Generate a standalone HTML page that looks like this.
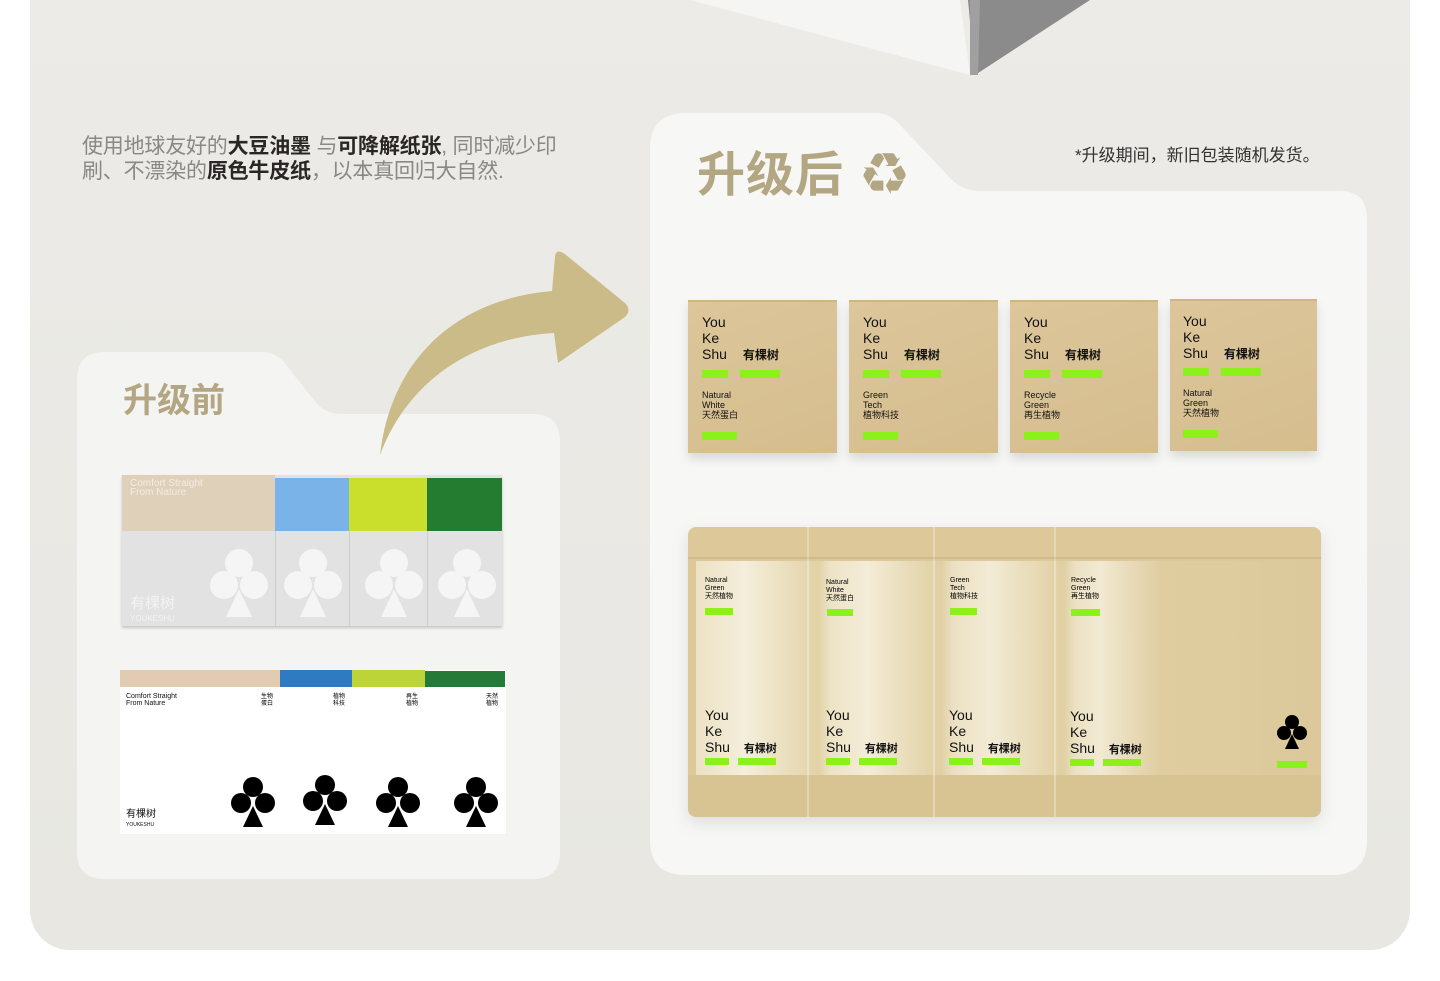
<!DOCTYPE html>
<html><head><meta charset="utf-8">
<style>
*{margin:0;padding:0;box-sizing:border-box}
body{width:1440px;height:981px;background:#fff;position:relative;overflow:hidden;font-family:"Liberation Sans","Noto Sans CJK SC",sans-serif}
.abs{position:absolute}
.panel{left:30px;top:-20px;width:1380px;height:970px;border-radius:0 0 40px 40px;background:linear-gradient(180deg,#ecebe7,#e8e7e2)}
.intro{left:82px;top:134px;font-size:21px;line-height:25px;color:#8a8884;letter-spacing:-0.2px}
.intro b{color:#2a2626;font-weight:700}
.t{color:#b3a682;font-weight:700}
.box{background:linear-gradient(160deg,#dcc69a,#d5bd8e);box-shadow:0 6px 10px rgba(0,0,0,.12);border-top:2px solid #cfb583}
.yk{font-size:14px;line-height:16px;color:#111;font-family:"Liberation Sans","Noto Sans CJK SC",sans-serif}
.g{background:#8cf01a;position:absolute;height:8px}
.sm{font-size:9px;line-height:10px;color:#111}
.bag{border-radius:8px}
</style></head><body>
<div class="abs panel"></div>
<svg class="abs" style="left:690px;top:0" width="420" height="80"><polygon points="10,0 270,0 280,75 0,0" fill="#f5f5f4"/><polygon points="278,0 400,0 285,75" fill="#8b8b8b"/><polygon points="280,0 290,0 288,75 280,75" fill="#a0a0a0"/></svg>

<div class="abs intro">使用地球友好的<b>大豆油墨</b> 与<b>可降解纸张</b>, 同时减少印<br>刷、不漂染的<b>原色牛皮纸</b>，以本真回归大自然.</div>

<svg class="abs" style="left:77px;top:352px" width="484" height="528"><path d="M0 28 Q0 0 28 0 L185 0 Q200 0 210 14 L240 52 Q250 62 265 62 L456 62 Q483 62 483 90 L483 500 Q483 527 456 527 L28 527 Q0 527 0 500 Z" fill="#f4f4f3"/></svg>
<div class="abs t" style="left:123px;top:373px;font-size:34px">升级前</div>

<svg class="abs" style="left:650px;top:113px" width="718" height="763"><path d="M0 36 Q0 0 36 0 L225 0 Q240 0 250 12 L300 65 Q312 78 330 78 L690 78 Q717 78 717 106 L717 727 Q717 762 682 762 L36 762 Q0 762 0 727 Z" fill="#f7f7f6"/></svg>
<div class="abs t" style="left:697px;top:135px;font-size:48px;letter-spacing:1px;white-space:nowrap">升级后 <span style="font-family:'DejaVu Sans';font-size:58px;vertical-align:-3px">♻</span></div>
<div class="abs" style="left:1075px;top:141px;font-size:17px;color:#333">*升级期间，新旧包装随机发货。</div>

<svg class="abs" style="left:370px;top:245px" width="270" height="220"><path d="M10 210 C20 120 80 55 182 46 L185 12 Q186 2 196 10 L255 58 Q262 65 255 72 L188 118 L184 88 C110 92 40 130 10 210 Z" fill="#cbbb88"/></svg>

<div class="abs" style="left:122px;top:475px;width:380px;height:151px;background:#e2e2e2;box-shadow:0 2px 3px rgba(0,0,0,.2)">
 <div class="abs" style="left:0;top:0;width:153px;height:56px;background:#dfd0ba"></div>
 <div class="abs" style="left:153px;top:3px;width:74px;height:53px;background:#7ab3e7"></div>
 <div class="abs" style="left:227px;top:3px;width:78px;height:53px;background:#c9df2c"></div>
 <div class="abs" style="left:305px;top:3px;width:75px;height:53px;background:#237c30"></div>
 <div class="abs" style="left:8px;top:4px;font-size:10px;line-height:9px;color:#f4ede2">Comfort Straight<br>From Nature</div>
 <div class="abs" style="left:8px;top:122px;font-size:15px;line-height:13px;color:#f3f3f3">有棵树<br><span style="font-size:8px">YOUKESHU</span></div>
 <div class="abs" style="left:153px;top:56px;width:1px;height:95px;background:#ccc"></div>
 <div class="abs" style="left:227px;top:56px;width:1px;height:95px;background:#ccc"></div>
 <div class="abs" style="left:305px;top:56px;width:1px;height:95px;background:#ccc"></div>
 <svg class="abs" style="left:88px;top:72px" width="58" height="72"><g fill="#f5f5f5"><circle cx="29" cy="16" r="14"/><circle cx="14" cy="38" r="14"/><circle cx="44" cy="38" r="14"/><polygon points="29,42 16,70 42,70"/></g></svg>
 <svg class="abs" style="left:162px;top:72px" width="58" height="72"><g fill="#f5f5f5"><circle cx="29" cy="16" r="14"/><circle cx="14" cy="38" r="14"/><circle cx="44" cy="38" r="14"/><polygon points="29,42 16,70 42,70"/></g></svg>
 <svg class="abs" style="left:243px;top:72px" width="58" height="72"><g fill="#f5f5f5"><circle cx="29" cy="16" r="14"/><circle cx="14" cy="38" r="14"/><circle cx="44" cy="38" r="14"/><polygon points="29,42 16,70 42,70"/></g></svg>
 <svg class="abs" style="left:316px;top:72px" width="58" height="72"><g fill="#f5f5f5"><circle cx="29" cy="16" r="14"/><circle cx="14" cy="38" r="14"/><circle cx="44" cy="38" r="14"/><polygon points="29,42 16,70 42,70"/></g></svg>
</div>

<div class="abs" style="left:120px;top:670px;width:386px;height:164px;background:#fff">
 <div class="abs" style="left:0;top:0;width:160px;height:17px;background:#e2ccb1"></div>
 <div class="abs" style="left:160px;top:0;width:72px;height:17px;background:#2f7bc3"></div>
 <div class="abs" style="left:232px;top:0;width:73px;height:17px;background:#bcd43a"></div>
 <div class="abs" style="left:305px;top:1px;width:80px;height:16px;background:#247a37"></div>
 <div class="abs" style="left:6px;top:23px;font-size:7px;line-height:7px;color:#111">Comfort Straight<br>From Nature</div>
 <div class="abs" style="left:141px;top:24px;font-size:6px;line-height:7px">生物<br>蛋白</div>
 <div class="abs" style="left:213px;top:24px;font-size:6px;line-height:7px">植物<br>科技</div>
 <div class="abs" style="left:286px;top:24px;font-size:6px;line-height:7px">再生<br>植物</div>
 <div class="abs" style="left:366px;top:24px;font-size:6px;line-height:7px">天然<br>植物</div>
 <div class="abs" style="left:6px;top:140px;font-size:10px;line-height:9px;color:#111">有棵树<br><span style="font-size:5px">YOUKESHU</span></div>
 <svg class="abs" style="left:111px;top:106px" width="44" height="52"><g fill="#000"><circle cx="22" cy="11" r="10"/><circle cx="10" cy="27" r="10"/><circle cx="34" cy="27" r="10"/><polygon points="22,30 12,51 32,51"/></g></svg>
 <svg class="abs" style="left:183px;top:104px" width="44" height="52"><g fill="#000"><circle cx="22" cy="11" r="10"/><circle cx="10" cy="27" r="10"/><circle cx="34" cy="27" r="10"/><polygon points="22,30 12,51 32,51"/></g></svg>
 <svg class="abs" style="left:256px;top:106px" width="44" height="52"><g fill="#000"><circle cx="22" cy="11" r="10"/><circle cx="10" cy="27" r="10"/><circle cx="34" cy="27" r="10"/><polygon points="22,30 12,51 32,51"/></g></svg>
 <svg class="abs" style="left:334px;top:106px" width="44" height="52"><g fill="#000"><circle cx="22" cy="11" r="10"/><circle cx="10" cy="27" r="10"/><circle cx="34" cy="27" r="10"/><polygon points="22,30 12,51 32,51"/></g></svg>
</div>

<div class="abs box" style="left:688px;top:300px;width:149px;height:153px">
 <div class="abs yk" style="left:14px;top:12px">You<br>Ke<br>Shu <span style="font-size:12px;margin-left:12px;font-weight:700">有棵树</span></div>
 <div class="g" style="left:14px;top:68px;width:26px"></div><div class="g" style="left:52px;top:68px;width:40px"></div>
 <div class="abs sm" style="left:14px;top:88px">Natural<br>White<br>天然蛋白</div>
 <div class="g" style="left:14px;top:130px;width:35px"></div>
</div>
<div class="abs box" style="left:849px;top:300px;width:149px;height:153px">
 <div class="abs yk" style="left:14px;top:12px">You<br>Ke<br>Shu <span style="font-size:12px;margin-left:12px;font-weight:700">有棵树</span></div>
 <div class="g" style="left:14px;top:68px;width:26px"></div><div class="g" style="left:52px;top:68px;width:40px"></div>
 <div class="abs sm" style="left:14px;top:88px">Green<br>Tech<br>植物科技</div>
 <div class="g" style="left:14px;top:130px;width:35px"></div>
</div>
<div class="abs box" style="left:1010px;top:300px;width:148px;height:153px">
 <div class="abs yk" style="left:14px;top:12px">You<br>Ke<br>Shu <span style="font-size:12px;margin-left:12px;font-weight:700">有棵树</span></div>
 <div class="g" style="left:14px;top:68px;width:26px"></div><div class="g" style="left:52px;top:68px;width:40px"></div>
 <div class="abs sm" style="left:14px;top:88px">Recycle<br>Green<br>再生植物</div>
 <div class="g" style="left:14px;top:130px;width:35px"></div>
</div>
<div class="abs box" style="left:1170px;top:299px;width:147px;height:152px">
 <div class="abs yk" style="left:13px;top:12px">You<br>Ke<br>Shu <span style="font-size:12px;margin-left:12px;font-weight:700">有棵树</span></div>
 <div class="g" style="left:13px;top:67px;width:26px"></div><div class="g" style="left:51px;top:67px;width:40px"></div>
 <div class="abs sm" style="left:13px;top:87px">Natural<br>Green<br>天然植物</div>
 <div class="g" style="left:13px;top:129px;width:35px"></div>
</div>

<div class="abs" style="left:688px;top:527px;width:633px;height:292px;filter:drop-shadow(0 6px 8px rgba(0,0,0,.1))">
 <div class="abs bag" style="left:0;top:0;width:633px;height:290px;background:#dcc898"></div>
 <div class="abs" style="left:8px;top:34px;width:612px;height:214px;background:linear-gradient(90deg,#ece2c4 0%,#f4eedb 8%,#e2d2a6 20%,#ede3c6 22%,#f3ecd7 28%,#e0cfa2 40%,#ebe0c2 42%,#f2ebd5 48%,#e0cfa2 60%,#ece1c3 62%,#f1e9d2 66%,#dfcda0 76%,#dcc99b 100%)"></div>
 <div class="abs" style="left:0;top:248px;width:633px;height:42px;background:#d8c393;border-radius:0 0 8px 8px"></div>
 <div class="abs" style="left:119px;top:0;width:2px;height:290px;background:rgba(255,255,255,.3)"></div>
 <div class="abs" style="left:245px;top:0;width:2px;height:290px;background:rgba(255,255,255,.3)"></div>
 <div class="abs" style="left:366px;top:0;width:2px;height:290px;background:rgba(255,255,255,.3)"></div>
 <div class="abs" style="left:0;top:30px;width:633px;height:2px;background:rgba(180,160,110,.3)"></div>

 <div class="abs" style="left:17px;top:50px;font-size:7px;line-height:8px">Natural<br>Green<br>天然植物</div><div class="g" style="left:17px;top:81px;width:28px;height:7px"></div>
 <div class="abs" style="left:138px;top:52px;font-size:7px;line-height:8px">Natural<br>White<br>天然蛋白</div><div class="g" style="left:139px;top:82px;width:26px;height:7px"></div>
 <div class="abs" style="left:262px;top:50px;font-size:7px;line-height:8px">Green<br>Tech<br>植物科技</div><div class="g" style="left:262px;top:81px;width:27px;height:7px"></div>
 <div class="abs" style="left:383px;top:50px;font-size:7px;line-height:8px">Recycle<br>Green<br>再生植物</div><div class="g" style="left:383px;top:82px;width:29px;height:7px"></div>

 <div class="abs yk" style="left:17px;top:180px">You<br>Ke<br>Shu <span style="font-size:11px;margin-left:10px;font-weight:700">有棵树</span></div>
 <div class="g" style="left:17px;top:231px;width:24px;height:7px"></div><div class="g" style="left:50px;top:231px;width:38px;height:7px"></div>
 <div class="abs yk" style="left:138px;top:180px">You<br>Ke<br>Shu <span style="font-size:11px;margin-left:10px;font-weight:700">有棵树</span></div>
 <div class="g" style="left:138px;top:231px;width:24px;height:7px"></div><div class="g" style="left:171px;top:231px;width:38px;height:7px"></div>
 <div class="abs yk" style="left:261px;top:180px">You<br>Ke<br>Shu <span style="font-size:11px;margin-left:10px;font-weight:700">有棵树</span></div>
 <div class="g" style="left:261px;top:231px;width:24px;height:7px"></div><div class="g" style="left:294px;top:231px;width:38px;height:7px"></div>
 <div class="abs yk" style="left:382px;top:181px">You<br>Ke<br>Shu <span style="font-size:11px;margin-left:10px;font-weight:700">有棵树</span></div>
 <div class="g" style="left:382px;top:232px;width:24px;height:7px"></div><div class="g" style="left:415px;top:232px;width:38px;height:7px"></div>
 <svg class="abs" style="left:589px;top:187px" width="30" height="36"><g fill="#000"><circle cx="15" cy="8" r="7"/><circle cx="7" cy="19" r="7"/><circle cx="23" cy="19" r="7"/><polygon points="15,20 8,35 22,35"/></g></svg>
 <div class="g" style="left:589px;top:234px;width:30px;height:7px"></div>
</div>
</body></html>
